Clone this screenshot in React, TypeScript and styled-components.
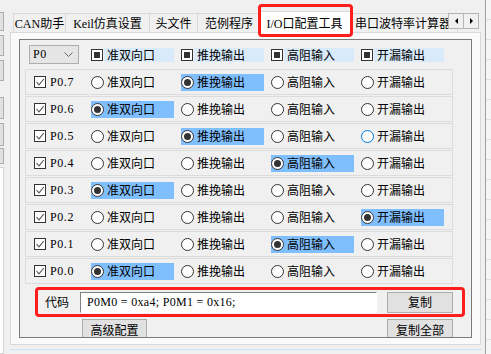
import * as React from 'react';
import styled, { createGlobalStyle } from 'styled-components';

const GlobalStyle = createGlobalStyle`
	html, body {
		margin: 0;
		padding: 0;
		background: #f0f0f0;
	}
	body {
		font-family: 'Liberation Serif', 'Noto Sans CJK SC', serif;
		font-size: 12px;
		color: #000;
	}
`;

const MODES = ['准双向口', '推挽输出', '高阻输入', '开漏输出'];
const PINS = [7, 6, 5, 4, 3, 2, 1, 0];
const PIN_MODE: Record<number, number> = { 7: 1, 6: 0, 5: 1, 4: 2, 3: 0, 2: 3, 1: 2, 0: 0 };

const TABS = [
	{ label: 'CAN助手', width: 53 },
	{ label: 'Keil仿真设置', width: 85 },
	{ label: '头文件', width: 49 },
	{ label: '范例程序', width: 64 },
	{ label: 'I/O口配置工具', width: 89, active: true },
	{ label: '串口波特率计算器', width: 110 },
];

const Screen = styled.div({
	display: 'flex',
	width: '491px',
	height: '354px',
	overflow: 'hidden',
});

const LeftStrip = styled.div({
	width: '4px',
	flexShrink: 0,
	display: 'flex',
	flexDirection: 'column',
});

const Stub = styled.div<{ $top: number; $height?: number; $white?: boolean }>((p) => ({
	marginTop: `${p.$top}px`,
	height: p.$height ? `${p.$height}px` : 'auto',
	flex: p.$height ? 'none' : 1,
	width: '4px',
	boxSizing: 'border-box',
	background: p.$white ? '#fff' : '#e1e1e1',
	border: `1px solid ${p.$white ? '#d6d6d6' : '#adadad'}`,
	borderLeft: 'none',
}));

const Main = styled.div({
	width: '481px',
	flexShrink: 0,
	boxSizing: 'border-box',
	padding: '0 4px 0 6px',
	display: 'flex',
	flexDirection: 'column',
});

const TabStrip = styled.div({
	position: 'relative',
	height: '32px',
	display: 'flex',
	alignItems: 'flex-end',
	paddingLeft: '3px',
});

const Tab = styled.div<{ $w: number; $active?: boolean }>((p) => ({
	position: 'relative',
	zIndex: p.$active ? 2 : 0,
	flexShrink: 0,
	boxSizing: 'border-box',
	width: `${p.$active ? p.$w + 4 : p.$w}px`,
	height: p.$active ? '22px' : '19px',
	margin: p.$active ? '0 -3px -1px -2px' : '0 -1px 0 0',
	display: 'flex',
	alignItems: 'center',
	justifyContent: 'center',
	whiteSpace: 'nowrap',
	border: '1px solid #d9d9d9',
	borderBottom: 'none',
	background: p.$active ? '#fff' : '#f0f0f0',
	'&::after': p.$active
		? {
				content: '""',
				position: 'absolute',
				left: '-1px',
				right: '-3px',
				top: '-8px',
				bottom: '-4px',
				border: '3px solid #ff1e1e',
				borderRadius: '4px',
		  }
		: {},
}));

const ScrollArrows = styled.div({
	position: 'absolute',
	right: '2px',
	top: '13px',
	zIndex: 3,
	display: 'flex',
});

const ArrowButton = styled.div<{ $dir: 'left' | 'right' }>((p) => ({
	width: '16px',
	height: '16px',
	boxSizing: 'border-box',
	marginLeft: p.$dir === 'right' ? '-1px' : 0,
	border: '1px solid #b5b5b5',
	background: '#f0f0f0',
	display: 'flex',
	alignItems: 'center',
	justifyContent: 'center',
	'&::before': {
		content: '""',
		width: 0,
		height: 0,
		borderTop: '3px solid transparent',
		borderBottom: '3px solid transparent',
		[p.$dir === 'left' ? 'borderRight' : 'borderLeft']: '3px solid #000',
	},
}));

const Panel = styled.div({
	height: '313px',
	boxSizing: 'border-box',
	border: '1px solid #d9d9d9',
	background: '#fafafa',
	padding: '6px 8px',
});

const GroupBox = styled.div({
	height: '299px',
	boxSizing: 'border-box',
	border: '1px solid #7a7a7a',
	background: '#f0f0f0',
	padding: '4px 0 0 5px',
	overflow: 'hidden',
});

const TopRow = styled.div({
	width: '428px',
	height: '21px',
	boxSizing: 'border-box',
	border: '1px solid transparent',
	marginBottom: '4px',
	display: 'flex',
	alignItems: 'center',
});

const PortCell = styled.div({
	width: '65px',
	paddingLeft: '3px',
	boxSizing: 'border-box',
	display: 'flex',
	alignItems: 'center',
});

const Select = styled.div({
	width: '50px',
	height: '19px',
	boxSizing: 'border-box',
	border: '1px solid #adadad',
	background: '#e5e5e5',
	padding: '0 5px 0 3px',
	display: 'flex',
	alignItems: 'center',
	justifyContent: 'space-between',
	letterSpacing: '0.5px',
});

const OptCell = styled.div({
	width: '90px',
	flexShrink: 0,
	display: 'flex',
	alignItems: 'center',
});

const MixedBox = styled.div({
	width: '12px',
	height: '12px',
	boxSizing: 'border-box',
	border: '1px solid #333',
	background: '#fff',
	display: 'flex',
	alignItems: 'center',
	justifyContent: 'center',
	'&::before': {
		content: '""',
		width: '6px',
		height: '6px',
		background: '#333',
	},
});

const AllLabel = styled.div({
	marginLeft: '1px',
	width: '70px',
	height: '14px',
	boxSizing: 'border-box',
	paddingLeft: '3px',
	background: '#d9ebfa',
	display: 'flex',
	alignItems: 'center',
	whiteSpace: 'nowrap',
});

const PinRow = styled.div({
	width: '428px',
	height: '26px',
	boxSizing: 'border-box',
	border: '1px solid #dcdcdc',
	marginBottom: '1px',
	display: 'flex',
	alignItems: 'center',
});

const PinCell = styled.div({
	width: '65px',
	flexShrink: 0,
	boxSizing: 'border-box',
	paddingLeft: '8px',
	display: 'flex',
	alignItems: 'center',
	gap: '4px',
});

const PinName = styled.span({
	letterSpacing: '0.6px',
});

const CheckBox = styled.div({
	width: '12px',
	height: '12px',
	boxSizing: 'border-box',
	border: '1px solid #333',
	background: '#fff',
	display: 'flex',
	alignItems: 'center',
	justifyContent: 'center',
});

const Option = styled.div<{ $on: boolean }>((p) => ({
	width: '83px',
	height: '17px',
	display: 'flex',
	alignItems: 'center',
	gap: '3px',
	background: p.$on ? '#80bfff' : 'transparent',
	whiteSpace: 'nowrap',
}));

const Radio = styled.div<{ $on: boolean; $hover?: boolean }>((p) => ({
	width: '13px',
	height: '13px',
	boxSizing: 'border-box',
	borderRadius: '50%',
	border: `1px solid ${p.$hover ? '#0078d7' : '#333'}`,
	background: '#fff',
	display: 'flex',
	alignItems: 'center',
	justifyContent: 'center',
	'&::before': {
		content: '""',
		width: '7px',
		height: '7px',
		borderRadius: '50%',
		background: p.$on ? '#333' : 'transparent',
	},
}));

const CodeBox = styled.div({
	marginTop: '3px',
	marginLeft: '10px',
	width: '430px',
	height: '30px',
	boxSizing: 'border-box',
	border: '3px solid #ff1e1e',
	borderRadius: '4px',
	paddingLeft: '7px',
	display: 'flex',
	alignItems: 'center',
});

const CodeLabel = styled.span({
	width: '24px',
	marginRight: '11px',
	whiteSpace: 'nowrap',
});

const CodeField = styled.input({
	width: '297px',
	height: '21px',
	boxSizing: 'border-box',
	padding: '0 0 0 6px',
	margin: 0,
	border: '1px solid',
	borderColor: '#828282 #fff #fff #828282',
	background: '#fff',
	font: 'inherit',
	letterSpacing: '0.3px',
	outline: 'none',
});

const Button = styled.div<{ $w: number; $gap?: number }>((p) => ({
	width: `${p.$w}px`,
	height: '21px',
	marginLeft: `${p.$gap ?? 0}px`,
	flexShrink: 0,
	boxSizing: 'border-box',
	border: '1px solid #adadad',
	background: '#e1e1e1',
	display: 'flex',
	alignItems: 'center',
	justifyContent: 'center',
	whiteSpace: 'nowrap',
}));

const ButtonRow = styled.div({
	marginTop: '2px',
	marginLeft: '57px',
	width: '371px',
	display: 'flex',
	justifyContent: 'space-between',
});

const StatusLine = styled.div({
	marginTop: '4px',
	height: '1px',
	background: '#cce4f7',
});

const RightStrip = styled.div({
	flex: 1,
	borderLeft: '1px solid #a0a0a0',
	background:
		'repeating-linear-gradient(to bottom, #f5f5f5 0 19px, #e0e0e0 19px 20px)',
});

function hex(v: number) {
	return '0x' + v.toString(16).padStart(2, '0');
}

const Check = () => (
	<svg width='10' height='10' viewBox='0 0 10 10'>
		<polyline points='1.5,5 4,7.8 8.8,2' fill='none' stroke='#555' strokeWidth='1.1' />
	</svg>
);

const Chevron = () => (
	<svg width='9' height='5' viewBox='0 0 9 5'>
		<polyline points='0.5,0.5 4.5,4.5 8.5,0.5' fill='none' stroke='#666' strokeWidth='1' />
	</svg>
);

const App: React.FC = () => {
	let m0 = 0;
	let m1 = 0;
	PINS.forEach((pin) => {
		const mode = PIN_MODE[pin];
		if (mode & 1) m0 |= 1 << pin;
		if (mode & 2) m1 |= 1 << pin;
	});
	const code = `P0M0 = ${hex(m0)}; P0M1 = ${hex(m1)};`;

	return (
		<Screen>
			<GlobalStyle />
			<LeftStrip>
				<Stub $top={12} $height={19} />
				<Stub $top={4} $height={21} />
				<Stub $top={4} $height={21} />
				<Stub $top={16} $height={22} />
				<Stub $top={4} $height={23} />
				<Stub $top={2} $height={16} />
				<Stub $top={3} $white />
			</LeftStrip>
			<Main>
				<TabStrip>
					{TABS.map((t) => (
						<Tab key={t.label} $w={t.width} $active={t.active}>
							{t.label}
						</Tab>
					))}
					<ScrollArrows>
						<ArrowButton $dir='left' />
						<ArrowButton $dir='right' />
					</ScrollArrows>
				</TabStrip>
				<Panel>
					<GroupBox>
						<TopRow>
							<PortCell>
								<Select>
									<span>P0</span>
									<Chevron />
								</Select>
							</PortCell>
							{MODES.map((m) => (
								<OptCell key={m}>
									<MixedBox />
									<AllLabel>{m}</AllLabel>
								</OptCell>
							))}
						</TopRow>
						{PINS.map((pin) => (
							<PinRow key={pin}>
								<PinCell>
									<CheckBox>
										<Check />
									</CheckBox>
									<PinName>P0.{pin}</PinName>
								</PinCell>
								{MODES.map((m, i) => (
									<OptCell key={m}>
										<Option $on={PIN_MODE[pin] === i}>
											<Radio $on={PIN_MODE[pin] === i} $hover={pin === 5 && i === 3} />
											{m}
										</Option>
									</OptCell>
								))}
							</PinRow>
						))}
						<CodeBox>
							<CodeLabel>代码</CodeLabel>
							<CodeField readOnly value={code} />
							<Button $w={66} $gap={10}>
								复制
							</Button>
						</CodeBox>
						<ButtonRow>
							<Button $w={65}>高级配置</Button>
							<Button $w={66}>复制全部</Button>
						</ButtonRow>
					</GroupBox>
				</Panel>
				<StatusLine />
			</Main>
			<RightStrip />
		</Screen>
	);
};

export default App;
